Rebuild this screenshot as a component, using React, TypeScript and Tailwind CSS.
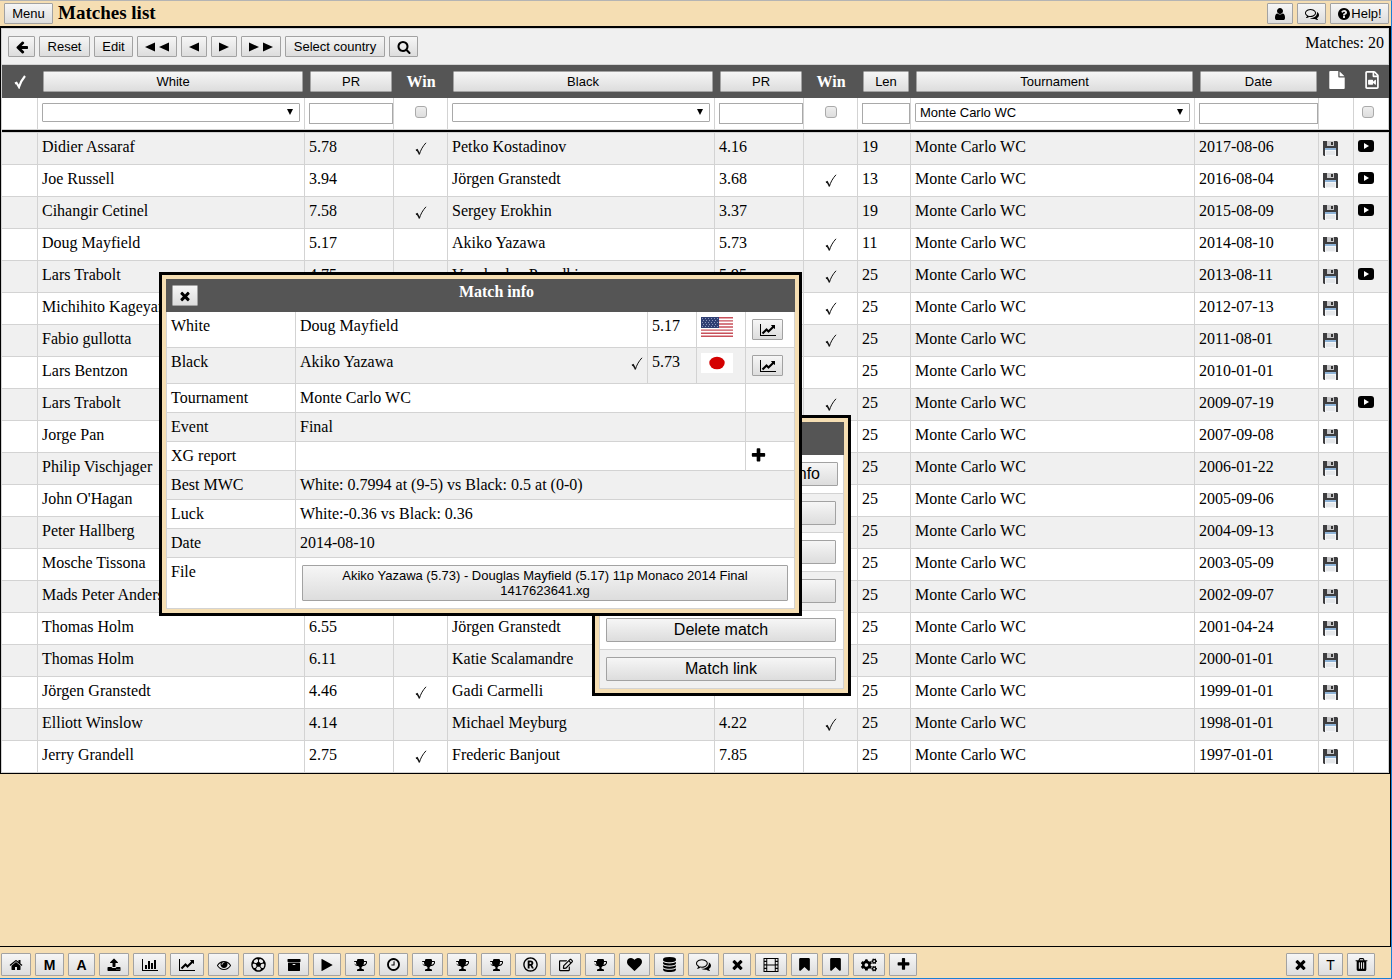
import type { ReactNode } from 'react';
import { FaCogs, FaRegEdit, FaRegFileVideo, FaRegFutbol, FaRegRegistered } from 'react-icons/fa';

const paths = {
  back: 'M1664 896v128q0 53-32.5 90.5t-84.5 37.5h-704l293 294q38 36 38 90t-38 90l-75 76q-37 37-90 37-52 0-91-37l-651-652q-37-37-37-90 0-52 37-91l651-650q38-38 91-38 52 0 90 38l75 74q38 38 38 91t-38 91l-293 293h704q52 0 84.5 37.5t32.5 90.5z',
  search: 'M1216 832q0-185-131.5-316.5t-316.5-131.5-316.5 131.5-131.5 316.5 131.5 316.5 316.5 131.5 316.5-131.5 131.5-316.5zm512 832q0 52-38 90t-90 38q-54 0-90-38l-343-342q-179 124-399 124-143 0-273.5-55.5t-225-150-150-225-55.5-273.5 55.5-273.5 150-225 225-150 273.5-55.5 273.5 55.5 225 150 150 225 55.5 273.5q0 220-124 399l343 343q37 37 37 90z',
  user: 'M1536 1399q0 109-62.5 187t-150.5 78h-854q-88 0-150.5-78t-62.5-187q0-85 8.5-160.5t31.5-152 58.5-131 94-89 134.5-34.5q131 128 313 128t313-128q76 0 134.5 34.5t94 89 58.5 131 31.5 152 8.5 160.5zm-256-887q0 159-112.5 271.5t-271.5 112.5-271.5-112.5-112.5-271.5 112.5-271.5 271.5-112.5 271.5 112.5 112.5 271.5z',
  comments: 'M704 384q-153 0-286 52t-211.5 141-78.5 191q0 82 53 158t149 132l97 56-35 84q34-20 62-39l44-31 53 10q78 14 153 14 153 0 286-52t211.5-141 78.5-191-78.5-191-211.5-141-286-52zm0-128q191 0 353.5 68.5t256.5 186.5 94 257-94 257-256.5 186.5-353.5 68.5q-86 0-176-16-124 88-278 128-36 9-86 16h-3q-11 0-20.5-8t-11.5-21q-1-3-1-6.5t.5-6.5 2-6l2.5-5 3.5-5.5 4-5 4.5-5 4-4.5q5-6 23-25t26-29.5 22.5-29 25-38.5 20.5-44q-124-72-195-177t-71-224q0-139 94-257t256.5-186.5 353.5-68.5zm822 1169q10 24 20.5 44t25 38.5 22.5 29 26 29.5 23 25q1 1 4 4.5t4.5 5 4 5 3.5 5.5l2.5 5 2 6 .5 6.5-1 6.5q-3 14-13 22t-22 7q-50-7-86-16-154-40-278-128-90 16-176 16-271 0-472-132 58 4 88 4 161 0 309-45t264-129q125-92 192-212t67-254q0-77-23-152 129 71 204 178t75 230q0 120-71 224.5t-195 176.5z',
  help: 'M1024 1376v-192q0-14-9-23t-23-9h-192q-14 0-23 9t-9 23v192q0 14 9 23t23 9h192q14 0 23-9t9-23zm256-672q0-88-55.5-163t-138.5-116-170-41q-243 0-371 213-15 24 8 42l132 100q7 6 19 6 16 0 25-12 53-68 86-92 34-24 86-24 48 0 85.5 26t37.5 59q0 38-20 61t-68 45q-63 28-115.5 86.5t-52.5 125.5v36q0 14 9 23t23 9h192q14 0 23-9t9-23q0-19 21.5-49.5t54.5-49.5q32-18 49-28.5t46-35 44.5-48 28-60.5 12.5-81zm384 192q0 209-103 385.5t-279.5 279.5-385.5 103-385.5-103-279.5-279.5-103-385.5 103-385.5 279.5-279.5 385.5-103 385.5 103 279.5 279.5 103 385.5z',
  home: 'M1472 992v480q0 26-19 45t-45 19h-384v-384h-256v384h-384q-26 0-45-19t-19-45v-480q0-1 .5-3t.5-3l575-474 575 474q1 2 1 6zm223-69l-62 74q-8 9-21 11h-3q-13 0-21-7l-692-577-692 577q-12 8-24 7-13-2-21-11l-62-74q-8-10-7-23.5t11-21.5l719-599q32-26 76-26t76 26l244 204v-195q0-14 9-23t23-9h192q14 0 23 9t9 23v408l219 182q10 8 11 21.5t-7 23.5z',
  upload: 'M1344 1472q0-26-19-45t-45-19-45 19-19 45 19 45 45 19 45-19 19-45zm256 0q0-26-19-45t-45-19-45 19-19 45 19 45 45 19 45-19 19-45zm128-224v320q0 40-28 68t-68 28h-1472q-40 0-68-28t-28-68v-320q0-40 28-68t68-28h427q21 56 70.5 92t110.5 36h256q61 0 110.5-36t70.5-92h427q40 0 68 28t28 68zm-325-648q-17 40-59 40h-256v448q0 26-19 45t-45 19h-256q-26 0-45-19t-19-45v-448h-256q-42 0-59-40-17-39 14-69l448-448q18-19 45-19t45 19l448 448q31 30 14 69z',
  bars: 'M640 896v512h-256v-512h256zm384-512v1024h-256v-1024h256zm1024 1152v128h-2048v-1536h128v1408h1920zm-640-896v768h-256v-768h256zm384-384v1152h-256v-1152h256z',
  line: 'M2048 1536v128h-2048v-1536h128v1408h1920zm-128-1248v435q0 21-19.5 29.5t-35.5-7.5l-121-121-633 633q-10 10-23 10t-23-10l-233-233-416 416-192-192 585-585q10-10 23-10t23 10l233 233 464-464-121-121q-16-16-7.5-35.5t29.5-19.5h435q14 0 23 9t9 23z',
  eye: 'M1664 960q-152-236-381-353 61 104 61 225 0 185-131.5 316.5t-316.5 131.5-316.5-131.5-131.5-316.5q0-121 61-225-229 117-381 353 133 205 333.5 326.5t434.5 121.5 434.5-121.5 333.5-326.5zm-720-384q0-20-14-34t-34-14q-125 0-214.5 89.5t-89.5 214.5q0 20 14 34t34 14 34-14 14-34q0-86 61-147t147-61q20 0 34-14t14-34zm848 384q0 34-20 69-140 230-376.5 368.5t-499.5 138.5-499.5-139-376.5-368q-20-35-20-69t20-69q140-229 376.5-368t499.5-139 499.5 139 376.5 368q20 35 20 69z',
  archive: 'M1088 832q0-26-19-45t-45-19h-256q-26 0-45 19t-19 45 19 45 45 19h256q26 0 45-19t19-45zm576-192v960q0 26-19 45t-45 19h-1408q-26 0-45-19t-19-45v-960q0-26 19-45t45-19h1408q26 0 45 19t19 45zm64-448v256q0 26-19 45t-45 19h-1536q-26 0-45-19t-19-45v-256q0-26 19-45t45-19h1536q26 0 45 19t19 45z',
  play: 'M1576 927l-1328 738q-23 13-39.5 3t-16.5-36v-1472q0-26 16.5-36t39.5 3l1328 738q23 13 23 31t-23 31z',
  trophy: 'M458 883q-74-162-74-371h-256v96q0 78 94.5 162t235.5 113zm1206-275v-96h-256q0 209-74 371 141-29 235.5-113t94.5-162zm128-128v128q0 71-41.5 143t-112 130-173 97.5-215.5 44.5q-42 54-95 95-38 34-52.5 72.5t-14.5 89.5q0 54 30.5 91t97.5 37q75 0 133.5 45.5t58.5 114.5v64q0 14-9 23t-23 9h-832q-14 0-23-9t-9-23v-64q0-69 58.5-114.5t133.5-45.5q67 0 97.5-37t30.5-91q0-51-14.5-89.5t-52.5-72.5q-53-41-95-95-113-5-215.5-44.5t-173-97.5-112-130-41.5-143v-128q0-40 28-68t68-28h288v-96q0-66 47-113t113-47h576q66 0 113 47t47 113v96h288q40 0 68 28t28 68z',
  clock: 'M1024 544v448q0 14-9 23t-23 9h-320q-14 0-23-9t-9-23v-64q0-14 9-23t23-9h224v-352q0-14 9-23t23-9h64q14 0 23 9t9 23zm416 352q0-148-73-273t-198-198-273-73-273 73-198 198-73 273 73 273 198 198 273 73 273-73 198-198 73-273zm224 0q0 209-103 385.5t-279.5 279.5-385.5 103-385.5-103-279.5-279.5-103-385.5 103-385.5 279.5-279.5 385.5-103 385.5 103 279.5 279.5 103 385.5z',
  heart: 'M896 1664q-26 0-44-18l-624-602q-10-8-27.5-26t-55.5-65.5-68-97.5-53.5-121-23.5-138q0-220 127-344t351-124q62 0 126.5 21.5t120 58 95.5 68.5 76 68q36-36 76-68t95.5-68.5 120-58 126.5-21.5q224 0 351 124t127 344q0 221-229 450l-623 600q-18 18-44 18z',
  database: 'M896 768q237 0 443-43t325-127v170q0 69-103 128t-280 93.5-385 34.5-385-34.5-280-93.5-103-128v-170q119 84 325 127t443 43zm0 768q237 0 443-43t325-127v170q0 69-103 128t-280 93.5-385 34.5-385-34.5-280-93.5-103-128v-170q119 84 325 127t443 43zm0-384q237 0 443-43t325-127v170q0 69-103 128t-280 93.5-385 34.5-385-34.5-280-93.5-103-128v-170q119 84 325 127t443 43zm0-1152q208 0 385 34.5t280 93.5 103 128v128q0 69-103 128t-280 93.5-385 34.5-385-34.5-280-93.5-103-128v-128q0-69 103-128t280-93.5 385-34.5z',
  times: 'M1490 1322q0 40-28 68l-136 136q-28 28-68 28t-68-28l-294-294-294 294q-28 28-68 28t-68-28l-136-136q-28-28-28-68t28-68l294-294-294-294q-28-28-28-68t28-68l136-136q28-28 68-28t68 28l294 294 294-294q28-28 68-28t68 28l136 136q28 28 28 68t-28 68l-294 294 294 294q28 28 28 68z',
  film: 'M64 0h1920v1792h-1920zM192 128v224h224v-224zM192 512v288h224v-288zM192 960v288h224v-288zM192 1408v256h224v-256zM544 128v704h960v-704zM544 960v704h960v-704zM1632 128v224h224v-224zM1632 512v288h224v-288zM1632 960v288h224v-288zM1632 1408v256h224v-256z',
  bookmark: 'M1420 128q23 0 44 9 33 13 52.5 41t19.500 62v1289q0 34-19.500 62t-52.500 41q-19 8-44 8-48 0-83-32l-441-424-441 424q-36 33-83 33-23 0-44-9-33-13-52.500-41t-19.500-62v-1289q0-34 19.500-62t52.500-41q21-9 44-9h1048z',
  plus: 'M1600 736v192q0 40-28 68t-68 28h-416v416q0 40-28 68t-68 28h-192q-40 0-68-28t-28-68v-416h-416q-40 0-68-28t-28-68v-192q0-40 28-68t68-28h416v-416q0-40 28-68t68-28h192q40 0 68 28t28 68v416h416q40 0 68 28t28 68z',
  file: 'M1152 512v-472q22 14 36 28l408 408q14 14 28 36h-472zm-128 32q0 40 28 68t68 28h544v1056q0 40-28 68t-68 28h-1344q-40 0-68-28t-28-68v-1600q0-40 28-68t68-28h800v544z',
  trash: 'M704 1376v-704q0-14-9-23t-23-9h-64q-14 0-23 9t-9 23v704q0 14 9 23t23 9h64q14 0 23-9t9-23zm256 0v-704q0-14-9-23t-23-9h-64q-14 0-23 9t-9 23v704q0 14 9 23t23 9h64q14 0 23-9t9-23zm256 0v-704q0-14-9-23t-23-9h-64q-14 0-23 9t-9 23v704q0 14 9 23t23 9h64q14 0 23-9t9-23zm-544-992h448l-48-117q-7-9-17-11h-317q-10 2-17 11zm928 32v64q0 14-9 23t-23 9h-96v948q0 83-47 143.500t-113 60.500h-832q-66 0-113-58.500t-47-141.500v-952h-96q-14 0-23-9t-9-23v-64q0-14 9-23t23-9h309l70-167q15-37 54-63t79-26h320q40 0 79 26t54 63l70 167h309q14 0 23 9t9 23z',
};

const Icon = ({ name, wide = false, className = '' }: { name: keyof typeof paths; wide?: boolean; className?: string }) => (
  <svg viewBox={wide ? '0 0 2048 1792' : '0 0 1792 1792'} className={`shrink-0 ${className || (wide ? 'h-3.5 w-4' : 'size-3.5')}`} fill="currentColor" fillRule={name === 'film' ? 'evenodd' : 'nonzero'} aria-hidden="true">
    <path d={paths[name]} />
  </svg>
);

const Tick = () => (
  <svg viewBox="0 0 12 14" className="h-3.5 w-3" fill="none" stroke="#111" aria-label="Winner">
    <path d="M1 8.5l1.2-.7 2.3 4.4" strokeWidth="1.5" />
    <path d="M4.3 12.6C5.6 8 8 4 11 .8" strokeWidth="1" />
  </svg>
);

const Disk = () => (
  <svg viewBox="0 0 15 15" className="size-[15px]" aria-hidden="true">
    <path d="M0 0h14l1 1v14H1l-1-1z" fill="#3d3d3f" />
    <path d="M4 0h7v5H4z" fill="#c9c9cb" />
    <path d="M8 1h2v3H8z" fill="#333" />
    <path d="M2 7h11v8H2z" fill="#f4f6f8" />
    <path d="M2 7h11v2H2z" fill="#8fb4d8" />
    <path d="M3 11h9M3 13h9" stroke="#d5d8dc" />
  </svg>
);

const Video = () => (
  <svg viewBox="0 0 16 12" className="h-3 w-4" aria-hidden="true">
    <rect width="16" height="12" rx="3" />
    <path d="M6 3l5 3-5 3z" fill="white" />
  </svg>
);

const Button = ({ children, label, className = '' }: { children?: ReactNode; label?: string; className?: string }) => (
  <button type="button" aria-label={label} className={`flex shrink-0 items-center justify-center rounded-[1px] border border-[#a2a2a2] bg-linear-to-b from-[#f6f6f6] to-[#dddddd] font-['Liberation_Sans',Arial,sans-serif] text-black ${className}`}>
    {children}
  </button>
);

const small = 'h-[21px] text-[13px]';
const head = 'h-[21px] w-full text-[13px] font-normal';
const td = 'h-8 border-r border-b border-[#d3d3d3] px-1 pt-[5px] align-top whitespace-nowrap';
const filterTd = 'h-8 border-r border-b border-[#d3d3d3] bg-white pt-[5px] pl-1 align-top';
const field = "block h-[21px] w-full rounded-none border border-[#a9a9a9] bg-white px-1 font-['Liberation_Sans',Arial,sans-serif] text-[13px]";
const checkbox = 'block size-3 appearance-none rounded-[3px] border border-[#aaa] bg-linear-to-b from-[#eee] to-[#ddd]';
const infoTd = 'border-r border-b border-[#d3d3d3] px-1 pt-[5px] align-top';

type Match = [white: string, prWhite: string, black: string, prBlack: string, winner: 'w' | 'b' | '', len: number, date: string, video?: boolean];

const matches: Match[] = [
  ['Didier Assaraf', '5.78', 'Petko Kostadinov', '4.16', 'w', 19, '2017-08-06', true],
  ['Joe Russell', '3.94', 'Jörgen Granstedt', '3.68', 'b', 13, '2016-08-04', true],
  ['Cihangir Cetinel', '7.58', 'Sergey Erokhin', '3.37', 'w', 19, '2015-08-09', true],
  ['Doug Mayfield', '5.17', 'Akiko Yazawa', '5.73', 'b', 11, '2014-08-10'],
  ['Lars Trabolt', '4.75', 'Vyacheslav Pryadkin', '5.95', 'b', 25, '2013-08-11', true],
  ['Michihito Kageyama', '', '', '', 'b', 25, '2012-07-13'],
  ['Fabio gullotta', '', '', '', 'b', 25, '2011-08-01'],
  ['Lars Bentzon', '', '', '', '', 25, '2010-01-01'],
  ['Lars Trabolt', '', '', '', 'b', 25, '2009-07-19', true],
  ['Jorge Pan', '', '', '', '', 25, '2007-09-08'],
  ['Philip Vischjager', '', '', '', '', 25, '2006-01-22'],
  ["John O'Hagan", '', '', '', '', 25, '2005-09-06'],
  ['Peter Hallberg', '', '', '', '', 25, '2004-09-13'],
  ['Mosche Tissona', '', '', '', '', 25, '2003-05-09'],
  ['Mads Peter Andersen', '', '', '', '', 25, '2002-09-07'],
  ['Thomas Holm', '6.55', 'Jörgen Granstedt', '', '', 25, '2001-04-24'],
  ['Thomas Holm', '6.11', 'Katie Scalamandre', '', '', 25, '2000-01-01'],
  ['Jörgen Granstedt', '4.46', 'Gadi Carmelli', '', 'w', 25, '1999-01-01'],
  ['Elliott Winslow', '4.14', 'Michael Meyburg', '4.22', 'b', 25, '1998-01-01'],
  ['Jerry Grandell', '2.75', 'Frederic Banjout', '7.85', 'w', 25, '1997-01-01'],
];

const shortcuts: { label: string; width: string; icon: ReactNode }[] = [
  { label: 'Home', width: 'w-[30px]', icon: <Icon name="home" /> },
  { label: 'Matches', width: 'w-[29px]', icon: <b>M</b> },
  { label: 'Analysis', width: 'w-[27px]', icon: <b>A</b> },
  { label: 'Upload', width: 'w-[30px]', icon: <Icon name="upload" /> },
  { label: 'Statistics', width: 'w-[33px]', icon: <Icon name="bars" wide /> },
  { label: 'Progress', width: 'w-[34px]', icon: <Icon name="line" wide /> },
  { label: 'Watch', width: 'w-[31px]', icon: <Icon name="eye" /> },
  { label: 'Games', width: 'w-[31px]', icon: <FaRegFutbol className="size-[15px]" /> },
  { label: 'Archive', width: 'w-[31px]', icon: <Icon name="archive" /> },
  { label: 'Play', width: 'w-[28px]', icon: <Icon name="play" /> },
  { label: 'Tournaments', width: 'w-[30px]', icon: <Icon name="trophy" /> },
  { label: 'Recent', width: 'w-[29px]', icon: <Icon name="clock" className="size-[15px]" /> },
  { label: 'Cups', width: 'w-[31px]', icon: <Icon name="trophy" /> },
  { label: 'Leagues', width: 'w-[30px]', icon: <Icon name="trophy" /> },
  { label: 'Champions', width: 'w-[30px]', icon: <Icon name="trophy" /> },
  { label: 'Ratings', width: 'w-[31px]', icon: <FaRegRegistered className="size-[15px]" /> },
  { label: 'Write', width: 'w-[31px]', icon: <FaRegEdit className="size-3.5" /> },
  { label: 'Winners', width: 'w-[30px]', icon: <Icon name="trophy" /> },
  { label: 'Favourites', width: 'w-[31px]', icon: <Icon name="heart" className="size-[15px]" /> },
  { label: 'Database', width: 'w-[30px]', icon: <Icon name="database" className="size-[15px]" /> },
  { label: 'Comments', width: 'w-[31px]', icon: <Icon name="comments" className="size-[15px]" /> },
  { label: 'Remove', width: 'w-[28px]', icon: <Icon name="times" className="size-[15px]" /> },
  { label: 'Videos', width: 'w-[32px]', icon: <Icon name="film" wide /> },
  { label: 'Bookmark', width: 'w-[27px]', icon: <Icon name="bookmark" className="size-[15px]" /> },
  { label: 'Bookmarks', width: 'w-[27px]', icon: <Icon name="bookmark" className="size-[15px]" /> },
  { label: 'Settings', width: 'w-[32px]', icon: <FaCogs className="size-4" /> },
  { label: 'Add', width: 'w-[28px]', icon: <Icon name="plus" className="size-[15px]" /> },
];

const Select = ({ label, value = '' }: { label: string; value?: string }) => (
  <div className="relative mr-1">
    <select aria-label={label} defaultValue={value} className="block h-[19px] w-full appearance-none rounded-[1px] border border-[#a9a9a9] bg-white px-1 font-['Liberation_Sans',Arial,sans-serif] text-[13px] leading-4">
      <option>{value}</option>
    </select>
    <svg viewBox="0 0 6 6" className="pointer-events-none absolute top-1.5 right-[7px] size-1.5" aria-hidden="true">
      <path d="M0 0h6L3 6z" />
    </svg>
  </div>
);

const UsaFlag = () => (
  <svg viewBox="0 0 32 20" className="h-5 w-8" aria-label="USA">
    <path d="M0 0h32v20H0z" fill="#fff" />
    <path d="M0 .8h32M0 3.900h32M0 7h32M0 10h32M0 13.100h32M0 16.200h32M0 19.300h32" stroke="#c8505a" strokeWidth="1.400" />
    <path d="M0 0h18v11H0z" fill="#2f3f73" />
    <path d="M1 1.500h16M2 3.500h15M1 5.500h16M2 7.500h15M1 9.500h16" stroke="#8c96ba" strokeDasharray="1 2" />
  </svg>
);

const JapanFlag = () => (
  <svg viewBox="0 0 32 20" className="h-5 w-8" aria-label="Japan">
    <path d="M0 0h32v20H0z" fill="#fff" />
    <ellipse cx="16" cy="10" rx="7.7" ry="6.3" fill="#d40000" />
  </svg>
);

const MatchMenu = () => (
  <div role="dialog" aria-label="Match menu" className="absolute top-[389px] left-[592px] w-[259px] border-3 border-black bg-[#f5deb3] p-1">
    <div className="h-[33px] bg-[#555]" />
    <ul className="border-l border-[#d3d3d3] [&>li]:h-[39px] [&>li]:border-r [&>li]:border-b [&>li]:border-[#d3d3d3] [&>li]:bg-white [&>li]:pt-[7px] [&>li]:pr-[7px] [&>li]:pl-1.5 [&>li:nth-child(even)]:bg-[#f0f0f0]">
      <li><Button className="h-6 w-[232px] justify-end pr-[17px] text-[16px]">Match info</Button></li>
      <li><Button label="Edit match" className="h-6 w-full" /></li>
      <li><Button label="Copy match" className="h-6 w-full" /></li>
      <li><Button label="Move match" className="h-6 w-full" /></li>
      <li><Button className="h-6 w-full text-[16px]">Delete match</Button></li>
      <li><Button className="h-6 w-full text-[16px]">Match link</Button></li>
    </ul>
  </div>
);

const MatchInfo = () => (
  <div role="dialog" aria-label="Match info" className="absolute top-[246px] left-[159px] w-[643px] border-3 border-black bg-[#f5deb3] p-1">
    <div className="flex h-[33px] items-start bg-[#555] pt-1 pl-1.5 text-white">
      <Button label="Close" className={`${small} mt-0.5 w-[26px]`}><Icon name="times" /></Button>
      <h2 className="flex-1 text-center font-bold">Match info</h2>
    </div>
    <table className="w-full table-fixed border-separate border-spacing-0 border-l border-[#d3d3d3]">
      <colgroup>
        <col className="w-[129px]" />
        <col />
        <col className="w-[49px]" />
        <col className="w-[49px]" />
        <col className="w-[49px]" />
      </colgroup>
      <tbody className="[&>tr]:bg-white [&>tr:nth-child(even)]:bg-[#f0f0f0]">
        <tr className="h-9">
          <td className={infoTd}>White</td>
          <td className={infoTd}>Doug Mayfield</td>
          <td className={infoTd}>5.17</td>
          <td className={infoTd}><UsaFlag /></td>
          <td className={`${infoTd} pl-1.5`}>
            <Button label="White statistics" className={`${small} mt-0.5 w-[31px]`}><Icon name="line" wide /></Button>
          </td>
        </tr>
        <tr className="h-9">
          <td className={infoTd}>Black</td>
          <td className={infoTd}>
            <div className="flex items-center justify-between">Akiko Yazawa<span className="pt-1"><Tick /></span></div>
          </td>
          <td className={infoTd}>5.73</td>
          <td className={infoTd}><JapanFlag /></td>
          <td className={`${infoTd} pl-1.5`}>
            <Button label="Black statistics" className={`${small} mt-0.5 w-[31px]`}><Icon name="line" wide /></Button>
          </td>
        </tr>
        <tr className="h-[29px]">
          <td className={infoTd}>Tournament</td>
          <td className={infoTd} colSpan={3}>Monte Carlo WC</td>
          <td className={infoTd} />
        </tr>
        <tr className="h-[29px]">
          <td className={infoTd}>Event</td>
          <td className={infoTd} colSpan={3}>Final</td>
          <td className={infoTd} />
        </tr>
        <tr className="h-[29px]">
          <td className={infoTd}>XG report</td>
          <td className={infoTd} colSpan={3} />
          <td className={infoTd}>
            <button type="button" aria-label="Add report" className="block"><Icon name="plus" className="size-[17px]" /></button>
          </td>
        </tr>
        {[
          ['Best MWC', 'White: 0.7994 at (9-5) vs Black: 0.5 at (0-0)'],
          ['Luck', 'White:-0.36 vs Black: 0.36'],
          ['Date', '2014-08-10'],
        ].map(([name, value]) => (
          <tr key={name} className="h-[29px]">
            <td className={infoTd}>{name}</td>
            <td className={infoTd} colSpan={4}>{value}</td>
          </tr>
        ))}
        <tr className="h-[51px]">
          <td className={infoTd}>File</td>
          <td className="border-r border-b border-[#d3d3d3] px-1.5 pt-[7px] align-top" colSpan={4}>
            <Button className="h-9 w-full px-8 text-[13px] leading-[15px]">Akiko Yazawa (5.73) - Douglas Mayfield (5.17) 11p Monaco 2014 Final 1417623641.xg</Button>
          </td>
        </tr>
      </tbody>
    </table>
  </div>
);

const App = () => (
  <div className="flex min-h-screen flex-col border-t border-r border-b border-t-[#b4b4b4] border-r-[#1a7fd4] border-b-[#1a7fd4] bg-[#f5deb3] font-['Liberation_Serif','Times_New_Roman',serif] text-[16px] leading-[18px] text-black">
    <header className="flex h-[25px] items-start gap-1 pt-0.5 pr-0.5 pl-1">
      <Button className={`${small} w-[49px]`}>Menu</Button>
      <h1 className="flex-1 pl-px text-[19px] leading-5 font-bold">Matches list</h1>
      <Button label="User" className={`${small} w-[26px]`}><Icon name="user" /></Button>
      <Button label="Chat" className={`${small} w-[29px]`}><Icon name="comments" /></Button>
      <Button className={`${small} w-[59px]`}><Icon name="help" />Help!</Button>
    </header>

    <main className="relative flex-1 border-r border-black">
      <section className="border-t-2 border-r border-b border-l border-black bg-white">
        <div className="flex h-[37px] items-start gap-1 border border-[#d3d3d3] bg-[#f0f0f0] pt-[7px] pr-1 pl-1.5">
          <Button label="Back" className={`${small} w-[27px]`}><Icon name="back" /></Button>
          <Button className={`${small} w-[51px]`}>Reset</Button>
          <Button className={`${small} w-[39px]`}>Edit</Button>
          {[['First', 2, true], ['Previous', 1, true], ['Next', 1, false], ['Last', 2, false]].map(([label, count, left]) => (
            <Button key={String(label)} label={String(label)} className={`${small} pt-px ${count === 2 ? 'w-10 gap-1' : 'w-[26px]'}`}>
              {Array.from({ length: Number(count) }, (_, i) => (
                <svg key={i} viewBox="0 0 10 10" className={`size-2.5 ${left ? 'rotate-180' : ''}`} aria-hidden="true"><path d="M0 .5l10 4.500L0 9.500z" /></svg>
              ))}
            </Button>
          ))}
          <Button className={`${small} w-[100px]`}>Select country</Button>
          <Button label="Search" className={`${small} w-[29px]`}><Icon name="search" /></Button>
          <p className="-mt-0.5 ml-auto">Matches: 20</p>
        </div>

        <table className="w-full table-fixed border-separate border-spacing-0 border-l border-[#d3d3d3]">
          <colgroup>
            <col className="w-9" />
            <col />
            <col className="w-[89px]" />
            <col className="w-[54px]" />
            <col />
            <col className="w-[89px]" />
            <col className="w-[54px]" />
            <col className="w-[53px]" />
            <col className="w-[284px]" />
            <col className="w-[124px]" />
            <col className="w-[35px]" />
            <col className="w-[35px]" />
          </colgroup>
          <thead>
            <tr className="h-[33px] bg-[#555] text-white">
              <th aria-label="Selected">
                <svg viewBox="0 0 12 14" className="mx-auto h-3.5 w-3" fill="none" stroke="white" aria-hidden="true">
                  <path d="M1 8.5l1.5-.7 2.5 4.2C6.5 7 8.5 4 11 1" strokeWidth="2.2" />
                </svg>
              </th>
              <th className="pr-0.5 pl-[5px]"><Button className={head}>White</Button></th>
              <th className="pr-0.5 pl-[5px]"><Button className={head}>PR</Button></th>
              <th className="font-bold">Win</th>
              <th className="pr-0.5 pl-[5px]"><Button className={head}>Black</Button></th>
              <th className="pr-0.5 pl-[5px]"><Button className={head}>PR</Button></th>
              <th className="font-bold">Win</th>
              <th className="pr-0.5 pl-[5px]"><Button className={head}>Len</Button></th>
              <th className="pr-0.5 pl-[5px]"><Button className={head}>Tournament</Button></th>
              <th className="pr-0.5 pl-[5px]"><Button className={head}>Date</Button></th>
              <th aria-label="File" className="pb-1"><Icon name="file" className="mx-auto size-[18px]" /></th>
              <th aria-label="Video" className="pb-1"><FaRegFileVideo className="mx-auto size-[18px]" /></th>
            </tr>
            <tr>
              <td className={filterTd} />
              <td className={filterTd}><Select label="Filter white" /></td>
              <td className={filterTd}><input aria-label="Filter white PR" className={field} /></td>
              <td className={filterTd}><input type="checkbox" aria-label="White won" className={`${checkbox} mt-[3px] ml-[17px]`} /></td>
              <td className={filterTd}><Select label="Filter black" /></td>
              <td className={filterTd}><input aria-label="Filter black PR" className={field} /></td>
              <td className={filterTd}><input type="checkbox" aria-label="Black won" className={`${checkbox} mt-[3px] ml-[17px]`} /></td>
              <td className={filterTd}><input aria-label="Filter length" className={field} /></td>
              <td className={filterTd}><Select label="Filter tournament" value="Monte Carlo WC" /></td>
              <td className={filterTd}><input aria-label="Filter date" className={field} /></td>
              <td className={filterTd} />
              <td className={filterTd}><input type="checkbox" aria-label="Has video" className={`${checkbox} mt-[3px] ml-1`} /></td>
            </tr>
            <tr aria-hidden="true">
              <td colSpan={12} className="h-0.5 bg-black p-0" />
            </tr>
          </thead>
          <tbody className="[&>tr:first-child>td]:h-[33px] [&>tr:first-child>td]:border-t">
            {matches.map(([white, prWhite, black, prBlack, winner, len, date, video]) => (
              <tr key={date} className="odd:bg-[#f0f0f0]">
                <td className={td} />
                <td className={td}>{white}</td>
                <td className={td}>{prWhite}</td>
                <td className={td}>{winner === 'w' && <div className="flex justify-center pt-1"><Tick /></div>}</td>
                <td className={td}>{black}</td>
                <td className={td}>{prBlack}</td>
                <td className={td}>{winner === 'b' && <div className="flex justify-center pt-1"><Tick /></div>}</td>
                <td className={td}>{len}</td>
                <td className={td}>Monte Carlo WC</td>
                <td className={td}>{date}</td>
                <td className={td}><button type="button" aria-label="Save" className="mt-[3px] block"><Disk /></button></td>
                <td className={td}>{video && <a href="#video" aria-label="Watch video" className="mt-0.5 block"><Video /></a>}</td>
              </tr>
            ))}
          </tbody>
        </table>
      </section>
      <MatchMenu />
      <MatchInfo />
    </main>

    <footer className="flex items-start justify-between border-t border-black pt-1.5 pr-4 pb-0.5 pl-px">
      <nav className="flex gap-1">
        {shortcuts.map(({ label, width, icon }) => (
          <Button key={label} label={label} className={`h-[23px] text-[14px] ${width}`}>{icon}</Button>
        ))}
      </nav>
      <div className="flex gap-1">
        <Button label="Clear" className="h-[23px] w-[28px]"><Icon name="times" className="size-[15px]" /></Button>
        <Button label="Text" className="h-[23px] w-[25px] text-[14px]">T</Button>
        <Button label="Delete" className="h-[23px] w-[28px]"><Icon name="trash" className="size-[15px]" /></Button>
      </div>
    </footer>
  </div>
);

export default App;
